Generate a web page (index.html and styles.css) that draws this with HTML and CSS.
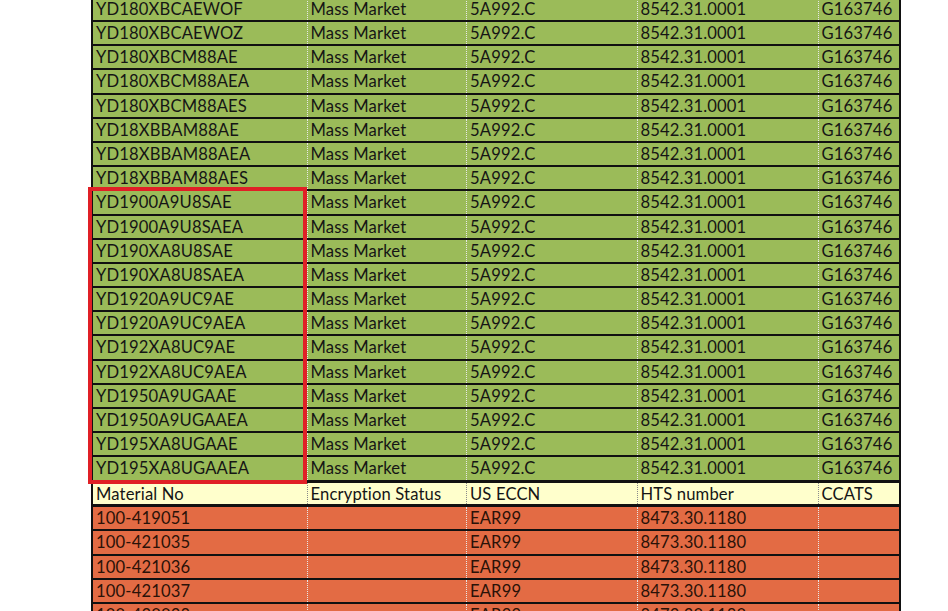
FILE: index.html
```html
<!DOCTYPE html>
<html>
<head>
<meta charset="utf-8">
<link rel="stylesheet" href="styles.css">
</head>
<body>
<div class="sheet">
  <div class="row green"><div class="c">YD180XBCAEWOF</div><div class="c">Mass Market</div><div class="c">5A992.C</div><div class="c">8542.31.0001</div><div class="c">G163746</div></div>
  <div class="row green"><div class="c">YD180XBCAEWOZ</div><div class="c">Mass Market</div><div class="c">5A992.C</div><div class="c">8542.31.0001</div><div class="c">G163746</div></div>
  <div class="row green"><div class="c">YD180XBCM88AE</div><div class="c">Mass Market</div><div class="c">5A992.C</div><div class="c">8542.31.0001</div><div class="c">G163746</div></div>
  <div class="row green"><div class="c">YD180XBCM88AEA</div><div class="c">Mass Market</div><div class="c">5A992.C</div><div class="c">8542.31.0001</div><div class="c">G163746</div></div>
  <div class="row green"><div class="c">YD180XBCM88AES</div><div class="c">Mass Market</div><div class="c">5A992.C</div><div class="c">8542.31.0001</div><div class="c">G163746</div></div>
  <div class="row green"><div class="c">YD18XBBAM88AE</div><div class="c">Mass Market</div><div class="c">5A992.C</div><div class="c">8542.31.0001</div><div class="c">G163746</div></div>
  <div class="row green"><div class="c">YD18XBBAM88AEA</div><div class="c">Mass Market</div><div class="c">5A992.C</div><div class="c">8542.31.0001</div><div class="c">G163746</div></div>
  <div class="row green"><div class="c">YD18XBBAM88AES</div><div class="c">Mass Market</div><div class="c">5A992.C</div><div class="c">8542.31.0001</div><div class="c">G163746</div></div>
  <div class="row green"><div class="c">YD1900A9U8SAE</div><div class="c">Mass Market</div><div class="c">5A992.C</div><div class="c">8542.31.0001</div><div class="c">G163746</div></div>
  <div class="row green"><div class="c">YD1900A9U8SAEA</div><div class="c">Mass Market</div><div class="c">5A992.C</div><div class="c">8542.31.0001</div><div class="c">G163746</div></div>
  <div class="row green"><div class="c">YD190XA8U8SAE</div><div class="c">Mass Market</div><div class="c">5A992.C</div><div class="c">8542.31.0001</div><div class="c">G163746</div></div>
  <div class="row green"><div class="c">YD190XA8U8SAEA</div><div class="c">Mass Market</div><div class="c">5A992.C</div><div class="c">8542.31.0001</div><div class="c">G163746</div></div>
  <div class="row green"><div class="c">YD1920A9UC9AE</div><div class="c">Mass Market</div><div class="c">5A992.C</div><div class="c">8542.31.0001</div><div class="c">G163746</div></div>
  <div class="row green"><div class="c">YD1920A9UC9AEA</div><div class="c">Mass Market</div><div class="c">5A992.C</div><div class="c">8542.31.0001</div><div class="c">G163746</div></div>
  <div class="row green"><div class="c">YD192XA8UC9AE</div><div class="c">Mass Market</div><div class="c">5A992.C</div><div class="c">8542.31.0001</div><div class="c">G163746</div></div>
  <div class="row green"><div class="c">YD192XA8UC9AEA</div><div class="c">Mass Market</div><div class="c">5A992.C</div><div class="c">8542.31.0001</div><div class="c">G163746</div></div>
  <div class="row green"><div class="c">YD1950A9UGAAE</div><div class="c">Mass Market</div><div class="c">5A992.C</div><div class="c">8542.31.0001</div><div class="c">G163746</div></div>
  <div class="row green"><div class="c">YD1950A9UGAAEA</div><div class="c">Mass Market</div><div class="c">5A992.C</div><div class="c">8542.31.0001</div><div class="c">G163746</div></div>
  <div class="row green"><div class="c">YD195XA8UGAAE</div><div class="c">Mass Market</div><div class="c">5A992.C</div><div class="c">8542.31.0001</div><div class="c">G163746</div></div>
  <div class="row green"><div class="c">YD195XA8UGAAEA</div><div class="c">Mass Market</div><div class="c">5A992.C</div><div class="c">8542.31.0001</div><div class="c">G163746</div></div>
  <div class="row head"><div class="c">Material No</div><div class="c">Encryption Status</div><div class="c">US ECCN</div><div class="c">HTS number</div><div class="c">CCATS</div></div>
  <div class="row orange"><div class="c">100-419051</div><div class="c"></div><div class="c">EAR99</div><div class="c">8473.30.1180</div><div class="c"></div></div>
  <div class="row orange"><div class="c">100-421035</div><div class="c"></div><div class="c">EAR99</div><div class="c">8473.30.1180</div><div class="c"></div></div>
  <div class="row orange"><div class="c">100-421036</div><div class="c"></div><div class="c">EAR99</div><div class="c">8473.30.1180</div><div class="c"></div></div>
  <div class="row orange"><div class="c">100-421037</div><div class="c"></div><div class="c">EAR99</div><div class="c">8473.30.1180</div><div class="c"></div></div>
  <div class="row orange"><div class="c">100-420038</div><div class="c"></div><div class="c">EAR99</div><div class="c">8473.30.1180</div><div class="c"></div></div>
  <div class="highlight"></div>
</div>
</body>
</html>
```

FILE: styles.css
```css
html, body {
  margin: 0;
  padding: 0;
  background: #ffffff;
  overflow: hidden;
}

.sheet {
  position: relative;
  margin: -2.2px 0 0 91px;
  width: 810px;
  box-sizing: border-box;
  border-left: 2px solid #111;
  border-right: 2px solid #111;
  font-family: Lato, "Open Sans", sans-serif;
  font-size: 16.6px;
  letter-spacing: 0.15px;
  color: #151515;
}

.row {
  display: grid;
  grid-template-columns: 213.5px 159.5px 170.5px 181px 81.5px;
  height: 24.2px;
  box-sizing: border-box;
  border-bottom: 2px solid #111;
}

.c {
  box-sizing: border-box;
  padding: 1px 0 0 3px;
  line-height: 21.2px;
  white-space: nowrap;
  overflow: hidden;
}

.c + .c {
  border-left: 1px dotted #e8e8e8;
}

.green {
  background: #9bbb59;
}

.orange {
  background: #e36b44;
  color: #2a1208;
}

.orange .c {
  line-height: 21px;
}

.head {
  background: #ffffcc;
  height: 25.7px;
  border-top: 1px solid #111;
  border-bottom: 3px solid #111;
  box-shadow: -1.5px 0 0 #111, 1.5px 0 0 #111;
}

.head .c {
  line-height: 20.7px;
}

.head .c + .c {
  border-left: 1px dotted #888;
}

.highlight {
  position: absolute;
  left: -5px;
  top: 189.4px;
  width: 218.5px;
  height: 297px;
  box-sizing: border-box;
  border: 4px solid #e02026;
  pointer-events: none;
}
```
